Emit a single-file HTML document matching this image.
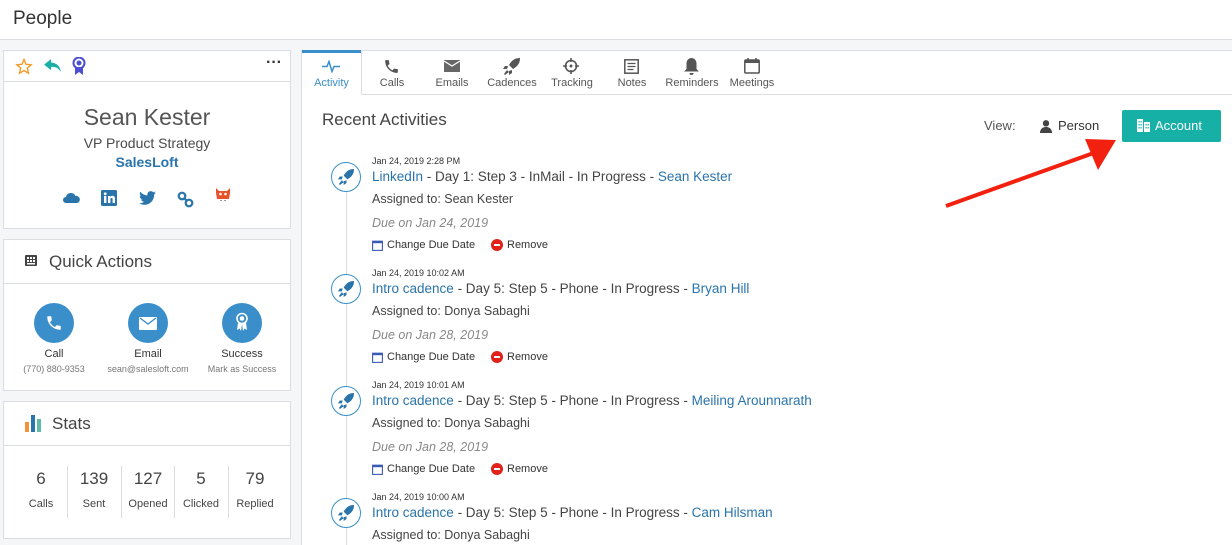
<!DOCTYPE html>
<html><head><meta charset="utf-8">
<style>
*{box-sizing:border-box;margin:0;padding:0}
body{width:1232px;height:545px;overflow:hidden;background:#f5f6f8;font-family:"Liberation Sans",sans-serif;color:#333;position:relative}
.a{position:absolute}
.card{position:absolute;background:#fff;border:1px solid #dcdde0}
.blue{color:#2a74ac}
.t{white-space:nowrap}
</style></head><body>
<div class="a" style="left:0;top:0;width:1232px;height:40px;background:#fff;border-bottom:1px solid #dcdde0"></div>
<div class="a t" style="left:13px;top:8px;font-size:19px;color:#333">People</div>

<!-- card 1 -->
<div class="card" style="left:3px;top:50px;width:288px;height:179px">
 <div style="height:31px;border-bottom:1px solid #dcdde0;position:relative">
  <svg class="a" style="left:11px;top:7px" width="18" height="17" viewBox="0 0 24 24"><path d="M12 2l3 7 7 .6-5.3 4.7 1.6 7.2L12 17.8 5.7 21.5l1.6-7.2L2 9.6 9 9z" fill="none" stroke="#f39a2b" stroke-width="2"/></svg>
  <svg class="a" style="left:40px;top:8px" width="17" height="14" viewBox="0 0 24 20"><path d="M10 0L0 8l10 8v-5c7 0 11 2 14 8-1-8-5-13-14-14z" fill="#1ab0a6"/></svg>
  <svg class="a" style="left:68px;top:6px" width="14" height="18" viewBox="0 0 14 18"><circle cx="7" cy="6" r="5.5" fill="none" stroke="#4c4fcf" stroke-width="2"/><circle cx="7" cy="6" r="2.5" fill="#4c4fcf"/><path d="M3 10v8l4-3 4 3v-8" fill="#4c4fcf"/></svg>
  <div class="a" style="left:262px;top:3px;font-size:16px;font-weight:bold;color:#333">···</div>
 </div>
 <div class="a t" style="left:0;width:286px;text-align:center;top:53px;font-size:23px;color:#555">Sean Kester</div>
 <div class="a t" style="left:0;width:286px;text-align:center;top:84px;font-size:14px;color:#4a4a4a">VP Product Strategy</div>
 <div class="a t blue" style="left:0;width:286px;text-align:center;top:103px;font-size:14px;font-weight:bold">SalesLoft</div>
 <svg class="a" style="left:59px;top:141px" width="17" height="11" viewBox="0 0 17 11"><path d="M3 11a3 3 0 010-6 5 5 0 019.5-1A3.5 3.5 0 0114 11z" fill="#2a74ac"/></svg>
 <svg class="a" style="left:97px;top:139px" width="16" height="16" viewBox="0 0 16 16"><rect width="16" height="16" rx="1.5" fill="#2a74ac"/><rect x="3" y="6" width="2.4" height="7" fill="#fff"/><circle cx="4.2" cy="3.8" r="1.4" fill="#fff"/><path d="M7 6h2.2v1c.5-.8 1.4-1.2 2.4-1.2 1.6 0 2.4 1 2.4 3V13h-2.4V9.3c0-.9-.3-1.4-1-1.4s-1.2.5-1.2 1.4V13H7z" fill="#fff"/></svg>
 <svg class="a" style="left:135px;top:140px" width="17" height="14" viewBox="0 0 24 20"><path d="M24 2.4c-.9.4-1.8.7-2.8.8 1-.6 1.8-1.6 2.2-2.7-1 .6-2 1-3.1 1.2A4.9 4.9 0 0012 6.2 14 14 0 011.7 1 4.9 4.9 0 003.2 7.6 4.9 4.9 0 011 7v.1a4.9 4.9 0 003.9 4.8 5 5 0 01-2.2.1 4.9 4.9 0 004.6 3.4A9.9 9.9 0 010 17.5 14 14 0 007.5 19.7c9 0 14-7.5 14-14v-.6c1-.7 1.8-1.6 2.5-2.7z" fill="#2a74ac"/></svg>
 <svg class="a" style="left:173px;top:140px" width="17" height="17" viewBox="0 0 17 17"><circle cx="5" cy="5" r="3.3" fill="none" stroke="#2a74ac" stroke-width="2.2"/><circle cx="12" cy="12" r="3.3" fill="none" stroke="#2a74ac" stroke-width="2.2"/><path d="M7 7l3 3" stroke="#2a74ac" stroke-width="2.2"/></svg>
 <svg class="a" style="left:211px;top:137px" width="16" height="13" viewBox="0 0 16 13"><path d="M1 0l3 3h8l3-3v5l-1 6H2L1 5z" fill="#e8522b"/><circle cx="5.5" cy="6" r="1.3" fill="#fff"/><circle cx="10.5" cy="6" r="1.3" fill="#fff"/><path d="M6 12v1M10 12v1" stroke="#333"/></svg>
</div>

<!-- card 2 -->
<div class="card" style="left:3px;top:239px;width:288px;height:152px">
 <div style="height:44px;border-bottom:1px solid #dcdde0;position:relative">
  <svg class="a" style="left:21px;top:15px" width="12" height="11" viewBox="0 0 12 11"><rect width="12" height="11" rx="1" fill="#444"/><g fill="#fff"><rect x="2" y="2" width="2" height="2"/><rect x="5" y="2" width="2" height="2"/><rect x="8" y="2" width="2" height="2"/><rect x="2" y="5" width="2" height="2"/><rect x="5" y="5" width="2" height="2"/><rect x="8" y="5" width="2" height="2"/><rect x="2" y="8" width="8" height="1.5"/></g></svg>
  <div class="a t" style="left:45px;top:12px;font-size:17px;color:#444">Quick Actions</div>
 </div>
 <div class="a" style="left:30px;top:63px;width:40px;height:40px;border-radius:50%;background:#3a8fcb"></div>
 <svg class="a" style="left:41px;top:74px" width="18" height="18" viewBox="0 0 24 24"><path d="M6.6 10.8a15 15 0 006.6 6.6l2.2-2.2c.3-.3.7-.4 1-.2 1.1.4 2.3.6 3.6.6.6 0 1 .4 1 1V20c0 .6-.4 1-1 1A17 17 0 013 4c0-.6.4-1 1-1h3.5c.6 0 1 .4 1 1 0 1.3.2 2.5.6 3.6.1.3 0 .7-.2 1z" fill="#fff"/></svg>
 <div class="a" style="left:124px;top:63px;width:40px;height:40px;border-radius:50%;background:#3a8fcb"></div>
 <svg class="a" style="left:135px;top:77px" width="18" height="13" viewBox="0 0 18 13"><rect width="18" height="13" rx="1" fill="#fff"/><path d="M1 1l8 6 8-6" fill="none" stroke="#3a8fcb" stroke-width="1.4"/></svg>
 <div class="a" style="left:218px;top:63px;width:40px;height:40px;border-radius:50%;background:#3a8fcb"></div>
 <svg class="a" style="left:231px;top:72px" width="14" height="20" viewBox="0 0 14 20"><circle cx="7" cy="6.5" r="5" fill="none" stroke="#fff" stroke-width="1.6"/><circle cx="7" cy="6.5" r="2.3" fill="#fff"/><path d="M3 11l-1 7 2.5-1.5L6 19l1-7M11 11l1 7-2.5-1.5L8 19l-1-7" fill="#fff"/></svg>
 <div class="a t" style="left:0;width:100px;text-align:center;top:108px;font-size:11px;color:#333">Call</div>
 <div class="a t" style="left:0;width:100px;text-align:center;top:124px;font-size:9px;color:#777">(770) 880-9353</div>
 <div class="a t" style="left:94px;width:100px;text-align:center;top:108px;font-size:11px;color:#333">Email</div>
 <div class="a t" style="left:94px;width:100px;text-align:center;top:124px;font-size:9px;color:#777">sean@salesloft.com</div>
 <div class="a t" style="left:188px;width:100px;text-align:center;top:108px;font-size:11px;color:#333">Success</div>
 <div class="a t" style="left:188px;width:100px;text-align:center;top:124px;font-size:9px;color:#777">Mark as Success</div>
</div>

<!-- card 3 -->
<div class="card" style="left:3px;top:401px;width:288px;height:138px">
 <div style="height:44px;border-bottom:1px solid #dcdde0;position:relative">
  <div class="a" style="left:21px;top:20px;width:4px;height:10px;background:#f3923a"></div>
  <div class="a" style="left:27px;top:13px;width:4px;height:17px;background:#2a74ac"></div>
  <div class="a" style="left:33px;top:17px;width:4px;height:13px;background:#5fb9a9"></div>
  <div class="a t" style="left:48px;top:12px;font-size:17px;color:#444">Stats</div>
 </div>
 <div class="a" style="left:63px;top:64px;width:1px;height:52px;background:#dcdde0"></div>
 <div class="a" style="left:117px;top:64px;width:1px;height:52px;background:#dcdde0"></div>
 <div class="a" style="left:170px;top:64px;width:1px;height:52px;background:#dcdde0"></div>
 <div class="a" style="left:224px;top:64px;width:1px;height:52px;background:#dcdde0"></div>
 <div class="a t" style="left:10px;width:54px;text-align:center;top:67px;font-size:17px;color:#444">6</div>
 <div class="a t" style="left:10px;width:54px;text-align:center;top:96px;font-size:11px;color:#444">Calls</div>
 <div class="a t" style="left:63px;width:54px;text-align:center;top:67px;font-size:17px;color:#444">139</div>
 <div class="a t" style="left:63px;width:54px;text-align:center;top:96px;font-size:11px;color:#444">Sent</div>
 <div class="a t" style="left:117px;width:54px;text-align:center;top:67px;font-size:17px;color:#444">127</div>
 <div class="a t" style="left:117px;width:54px;text-align:center;top:96px;font-size:11px;color:#444">Opened</div>
 <div class="a t" style="left:170px;width:54px;text-align:center;top:67px;font-size:17px;color:#444">5</div>
 <div class="a t" style="left:170px;width:54px;text-align:center;top:96px;font-size:11px;color:#444">Clicked</div>
 <div class="a t" style="left:224px;width:54px;text-align:center;top:67px;font-size:17px;color:#444">79</div>
 <div class="a t" style="left:224px;width:54px;text-align:center;top:96px;font-size:11px;color:#444">Replied</div>
</div>

<!-- right panel -->
<div class="a" style="left:301px;top:50px;width:931px;height:495px;background:#fff;border-left:1px solid #dcdde0;border-top:1px solid #dcdde0"></div>
<div class="a" style="left:362px;top:94px;width:870px;height:1px;background:#dcdde0"></div>
<div class="a" style="left:361px;top:51px;width:1px;height:44px;background:#dcdde0"></div>
<div class="a" style="left:302px;top:50px;width:59px;height:3px;background:#3a8fcb"></div>
<svg class="a" style="left:322px;top:60px" width="18" height="13" viewBox="0 0 18 13"><path d="M0 6.5h5l2-5 3 10 2-5h6" fill="none" stroke="#3a8fcb" stroke-width="1.5"/></svg>
<div class="a t" style="left:302px;width:59px;text-align:center;top:77px;font-size:11px;color:#3a8fcb">Activity</div>
<svg class="a" style="left:383px;top:58px" width="17" height="17" viewBox="0 0 24 24"><path d="M6.6 10.8a15 15 0 006.6 6.6l2.2-2.2c.3-.3.7-.4 1-.2 1.1.4 2.3.6 3.6.6.6 0 1 .4 1 1V20c0 .6-.4 1-1 1A17 17 0 013 4c0-.6.4-1 1-1h3.5c.6 0 1 .4 1 1 0 1.3.2 2.5.6 3.6.1.3 0 .7-.2 1z" fill="#555"/></svg>
<div class="a t" style="left:362px;width:60px;text-align:center;top:77px;font-size:11px;color:#555">Calls</div>
<svg class="a" style="left:444px;top:60px" width="16" height="12" viewBox="0 0 16 12"><rect width="16" height="12" fill="#666"/><path d="M0 1l8 5 8-5" fill="none" stroke="#fff" stroke-width="1.2"/></svg>
<div class="a t" style="left:422px;width:60px;text-align:center;top:77px;font-size:11px;color:#555">Emails</div>
<svg class="a" style="left:503px;top:58px" width="17" height="17" viewBox="0 0 17 17"><path d="M17 0c-5 0-8 2-11 7l4 4c5-3 7-6 7-11zM5 8L2 8 0 11l4 0zM9 12v3l-3 2 0-4zM4 12l-3 4 1 1 4-3z" fill="#555"/></svg>
<div class="a t" style="left:482px;width:60px;text-align:center;top:77px;font-size:11px;color:#555">Cadences</div>
<svg class="a" style="left:563px;top:58px" width="16" height="16" viewBox="0 0 16 16"><circle cx="8" cy="8" r="5.5" fill="none" stroke="#555" stroke-width="1.6"/><circle cx="8" cy="8" r="1.5" fill="#555"/><path d="M8 0v4M8 12v4M0 8h4M12 8h4" stroke="#555" stroke-width="1.6"/></svg>
<div class="a t" style="left:542px;width:60px;text-align:center;top:77px;font-size:11px;color:#555">Tracking</div>
<svg class="a" style="left:624px;top:59px" width="15" height="15" viewBox="0 0 15 15"><rect x=".8" y=".8" width="13.4" height="13.4" fill="none" stroke="#555" stroke-width="1.5"/><path d="M3.5 4.5h8M3.5 7.5h8M3.5 10.5h6" stroke="#555" stroke-width="1.3"/></svg>
<div class="a t" style="left:602px;width:60px;text-align:center;top:77px;font-size:11px;color:#555">Notes</div>
<svg class="a" style="left:684px;top:58px" width="15" height="17" viewBox="0 0 15 17"><path d="M7.5 0c-3 0-5 2.5-5 5.5V11L0 13.5h15L12.5 11V5.5C12.5 2.5 10.5 0 7.5 0zM5.5 15a2 2 0 004 0z" fill="#555"/></svg>
<div class="a t" style="left:662px;width:60px;text-align:center;top:77px;font-size:11px;color:#555">Reminders</div>
<svg class="a" style="left:744px;top:58px" width="16" height="16" viewBox="0 0 16 16"><rect x=".8" y="2" width="14.4" height="13" rx="1" fill="none" stroke="#555" stroke-width="1.5"/><rect x=".8" y="2" width="14.4" height="3" fill="#555"/><path d="M4 0v4M12 0v4" stroke="#555" stroke-width="1.5"/></svg>
<div class="a t" style="left:722px;width:60px;text-align:center;top:77px;font-size:11px;color:#555">Meetings</div>

<div class="a t" style="left:322px;top:110px;font-size:17px;color:#444">Recent Activities</div>
<div class="a t" style="left:984px;top:118px;font-size:13px;color:#555">View:</div>
<svg class="a" style="left:1040px;top:120px" width="12" height="13" viewBox="0 0 12 13"><circle cx="6" cy="3.3" r="3.2" fill="#444"/><path d="M0 13c0-4 2.5-6 6-6s6 2 6 6z" fill="#444"/></svg>
<div class="a t" style="left:1058px;top:118px;font-size:13px;color:#333">Person</div>
<div class="a" style="left:1122px;top:110px;width:99px;height:32px;background:#17b0a7;border-radius:2px"></div>
<svg class="a" style="left:1137px;top:119px" width="13" height="13" viewBox="0 0 13 13"><rect x="0" y="0" width="6" height="13" fill="#fff"/><rect x="7" y="3" width="6" height="10" fill="#fff"/><g fill="#17b0a7"><rect x="1.5" y="2" width="1.2" height="1.5"/><rect x="3.5" y="2" width="1.2" height="1.5"/><rect x="1.5" y="5" width="1.2" height="1.5"/><rect x="3.5" y="5" width="1.2" height="1.5"/><rect x="1.5" y="8" width="1.2" height="1.5"/><rect x="3.5" y="8" width="1.2" height="1.5"/><rect x="8.5" y="5" width="1.2" height="1.5"/><rect x="10.5" y="5" width="1.2" height="1.5"/><rect x="8.5" y="8" width="1.2" height="1.5"/><rect x="10.5" y="8" width="1.2" height="1.5"/></g></svg>
<div class="a t" style="left:1155px;top:118px;font-size:13px;color:#fff">Account</div>

<svg class="a" style="left:930px;top:130px" width="200" height="85" viewBox="0 0 200 85"><path d="M16 76L172 20" stroke="#f2200e" stroke-width="4"/><path d="M186 10L155 9 168 40z" fill="#f2200e"/></svg>

<div class="a" style="left:346px;top:190px;width:1px;height:355px;background:#dcdde0"></div>

<div id="acts"></div>
<script>
var d=[["Jan 24, 2019 2:28 PM","LinkedIn"," - Day 1: Step 3 - InMail - In Progress - ","Sean Kester","Sean Kester","Jan 24, 2019"],
["Jan 24, 2019 10:02 AM","Intro cadence"," - Day 5: Step 5 - Phone - In Progress - ","Bryan Hill","Donya Sabaghi","Jan 28, 2019"],
["Jan 24, 2019 10:01 AM","Intro cadence"," - Day 5: Step 5 - Phone - In Progress - ","Meiling Arounnarath","Donya Sabaghi","Jan 28, 2019"],
["Jan 24, 2019 10:00 AM","Intro cadence"," - Day 5: Step 5 - Phone - In Progress - ","Cam Hilsman","Donya Sabaghi","Jan 28, 2019"]];
var h="";
d.forEach(function(r,i){var y=i*112;
h+='<div class="a" style="left:331px;top:'+(162+y)+'px;width:30px;height:30px;border-radius:50%;border:1.5px solid #3a8fcb;background:#fff"></div>';
h+='<svg class="a" style="left:338px;top:'+(169+y)+'px" width="16" height="16" viewBox="0 0 17 17"><path d="M17 0c-5 0-8 2-11 7l4 4c5-3 7-6 7-11zM5 8L2 8 0 11l4 0zM9 12v3l-3 2 0-4zM4 12l-3 4 1 1 4-3z" fill="#2a74ac"/></svg>';
h+='<div class="a t" style="left:372px;top:'+(156+y)+'px;font-size:9px;color:#333">'+r[0]+'</div>';
h+='<div class="a t" style="left:372px;top:'+(169+y)+'px;font-size:13.5px;color:#444"><span class="blue">'+r[1]+'</span>'+r[2]+'<span class="blue">'+r[3]+'</span></div>';
h+='<div class="a t" style="left:372px;top:'+(192+y)+'px;font-size:12.5px;color:#444">Assigned to: '+r[4]+'</div>';
if(i<3){
h+='<div class="a t" style="left:372px;top:'+(216+y)+'px;font-size:12.5px;color:#888;font-style:italic">Due on '+r[5]+'</div>';
h+='<svg class="a" style="left:372px;top:'+(240+y)+'px" width="11" height="11" viewBox="0 0 11 11"><rect x=".6" y="1.2" width="9.8" height="9.2" fill="none" stroke="#3b5bb5" stroke-width="1.1"/><rect x=".6" y="1.2" width="9.8" height="2" fill="#3b5bb5"/></svg>';
h+='<div class="a t" style="left:387px;top:'+(239+y)+'px;font-size:11px;color:#333">Change Due Date</div>';
h+='<div class="a" style="left:491px;top:'+(239+y)+'px;width:12px;height:12px;border-radius:50%;background:#e0221b"></div><div class="a" style="left:494px;top:'+(244+y)+'px;width:6px;height:2px;background:#fff"></div>';
h+='<div class="a t" style="left:507px;top:'+(239+y)+'px;font-size:11px;color:#333">Remove</div>';}
});
document.getElementById("acts").innerHTML=h;
</script>
</body></html>
